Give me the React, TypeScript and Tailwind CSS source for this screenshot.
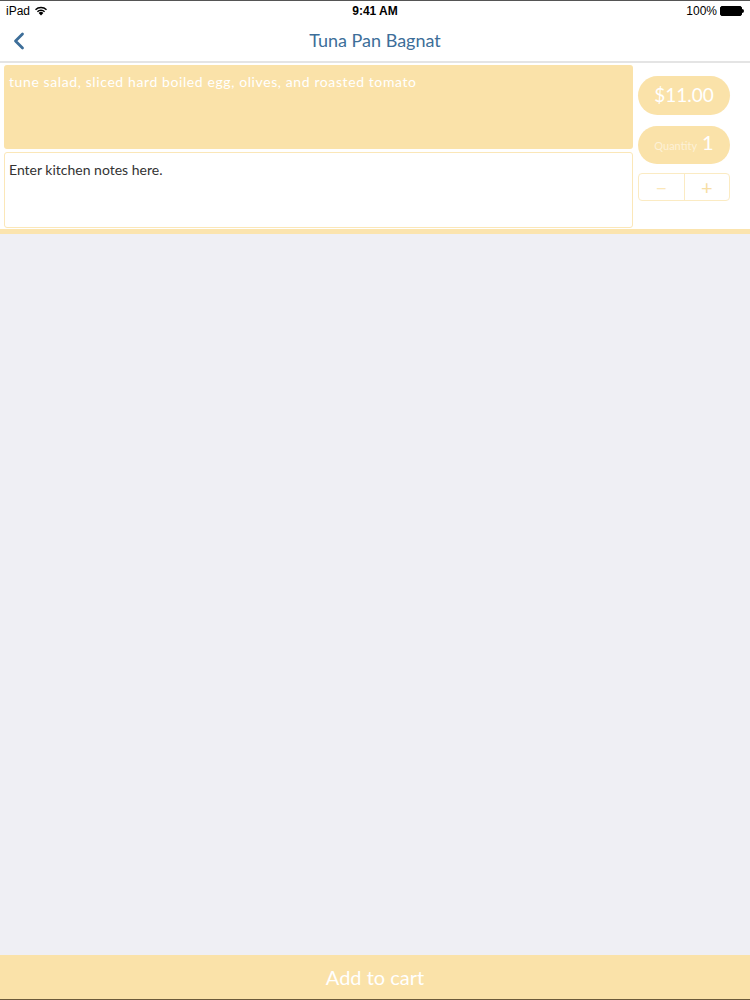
import { ChevronLeft } from 'lucide-react';

const yellow = 'bg-[#fae2a9]';

function StatusBar() {
  return (
    <div className="relative flex h-5 items-center justify-between border-t border-[#555] bg-white px-[6px] font-['Liberation_Sans',sans-serif] text-[12px] text-black">
      <div className="flex items-center gap-1">
        <span>iPad</span>
        <svg width="14" height="11" viewBox="0 0 14 11" aria-hidden>
          <path d="M7 10.5 4.6 7.9a3.4 3.4 0 0 1 4.8 0Z" fill="#000" />
          <path d="M2.9 6.2a5.8 5.8 0 0 1 8.2 0l-1 1a4.4 4.4 0 0 0-6.2 0Z" fill="#000" />
          <path d="M1 4.3a8.5 8.5 0 0 1 12 0l-1 1a7.1 7.1 0 0 0-10 0Z" fill="#000" />
        </svg>
      </div>
      <span className="absolute left-1/2 -translate-x-1/2 font-bold">9:41 AM</span>
      <div className="flex items-center gap-[3px]">
        <span>100%</span>
        <div className="flex items-center">
          <div className="h-[10px] w-[22px] rounded-[2px] border border-black bg-black" />
          <div className="h-[4px] w-[2px] rounded-r-sm bg-black" />
        </div>
      </div>
    </div>
  );
}

function NavBar() {
  return (
    <div className="relative flex h-[43px] items-center justify-center border-b-2 border-[#e4e4e4] bg-white">
      <ChevronLeft className="absolute left-[5px] h-[28px] w-[28px] text-[#3d6e99]" strokeWidth={2.4} />
      <span className="font-['Lato',sans-serif] text-[18px] text-[#3d6e99]">Tuna Pan Bagnat</span>
    </div>
  );
}

export default function App() {
  return (
    <div className="flex h-[1000px] w-[750px] flex-col bg-[#efeff4] font-['Lato',sans-serif]">
      <StatusBar />
      <NavBar />

      <div className="flex gap-[5px] border-b-[5px] border-[#fbe4ae] bg-white pt-[2px] pr-[20px] pb-[1px] pl-[4px]">
        <div className="flex flex-1 flex-col gap-[3px]">
          <div className={`h-[84px] rounded-[3px] ${yellow} px-[5px] pt-[6px] text-[14px] tracking-[0.6px] text-white`}>
            tune salad, sliced hard boiled egg, olives, and roasted tomato
          </div>
          <div className="h-[76px] rounded-[3px] border border-[#fbe7b8] bg-white px-[4px] pt-[6px] text-[14px] text-[#333]">
            Enter kitchen notes here.
          </div>
        </div>

        <div className="flex w-[92px] flex-col pt-[11px]">
          <div className={`flex h-[39px] items-center justify-center rounded-full ${yellow} text-[19px] text-white`}>
            $11.00
          </div>
          <div className={`mt-[11px] flex h-[38px] items-baseline justify-center gap-[5px] rounded-full ${yellow} pt-[6px] text-white`}>
            <span className="text-[11px] text-[#fdf1d6]">Quantity</span>
            <span className="text-[20px] leading-none">1</span>
          </div>
          <div className="mt-[9px] flex h-[28px] rounded-[4px] border border-[#fbebc3]">
            <div className="flex flex-1 items-center justify-center border-r border-[#fbebc3] text-[20px] text-[#fbe7b8]">
              −
            </div>
            <div className="flex flex-1 items-center justify-center text-[20px] text-[#f7dea4]">+</div>
          </div>
        </div>
      </div>

      <div className="flex-1" />

      <div className={`flex h-[45px] items-center justify-center border-b border-[#6b5a3a] ${yellow} text-[20px] text-white`}>
        Add to cart
      </div>
    </div>
  );
}
